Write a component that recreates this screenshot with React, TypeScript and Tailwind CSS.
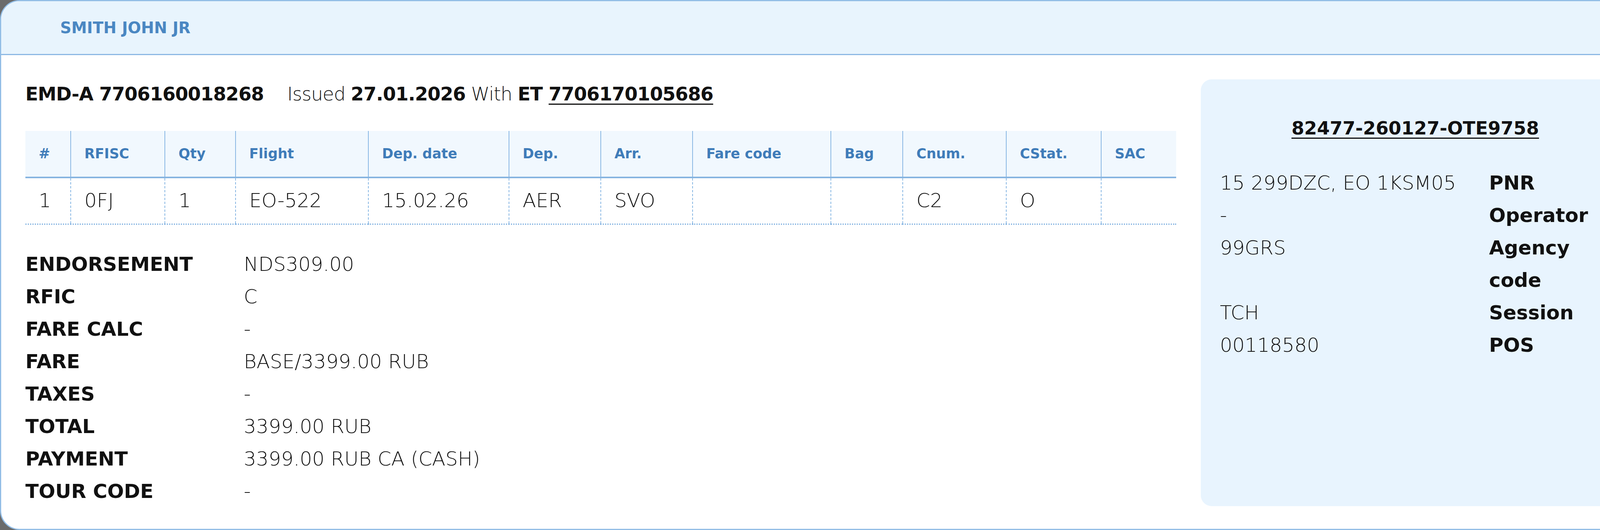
import React from "react";

const cols = [
  { key: "#", w: 116, v: "1" },
  { key: "RFISC", w: 241, v: "0FJ" },
  { key: "Qty", w: 181, v: "1" },
  { key: "Flight", w: 340, v: "EO-522" },
  { key: "Dep. date", w: 360, v: "15.02.26" },
  { key: "Dep.", w: 235, v: "AER" },
  { key: "Arr.", w: 235, v: "SVO" },
  { key: "Fare code", w: 354, v: "" },
  { key: "Bag", w: 184, v: "" },
  { key: "Cnum.", w: 265, v: "C2" },
  { key: "CStat.", w: 243, v: "O" },
  { key: "SAC", w: 192, v: "" },
];

const details = [
  ["ENDORSEMENT", "NDS309.00"],
  ["RFIC", "C"],
  ["FARE CALC", "-"],
  ["FARE", "BASE/3399.00 RUB"],
  ["TAXES", "-"],
  ["TOTAL", "3399.00 RUB"],
  ["PAYMENT", "3399.00 RUB CA (CASH)"],
  ["TOUR CODE", "-"],
];

const pnr = [
  ["15 299DZC, EO 1KSM05", "PNR"],
  ["-", "Operator"],
  ["99GRS", "Agency code"],
  ["TCH", "Session"],
  ["00118580", "POS"],
];

export default function App() {
  return (
    <div
      className="w-[4239px] h-[1356px] bg-[#6b6b6b] pr-[5px] overflow-hidden text-[#111111]"
      style={{ fontFamily: '"DejaVu Sans", "Liberation Sans", sans-serif' }}
    >
      <div className="h-full w-full bg-white rounded-[50px] border-[3px] border-[#92bde6] overflow-hidden flex flex-col">
        {/* passenger header */}
        <div className="h-[138px] shrink-0 bg-[#e8f4fd] border-b-[3px] border-[#8db9e4] flex items-center pl-[151px]">
          <span className="text-[40px] font-bold text-[#4a87c2] uppercase">Smith John Jr</span>
        </div>

        <div className="flex flex-1 pl-[62px] pr-[59px] pt-[62px] gap-[62px]">
          {/* left column */}
          <div className="flex-1 flex flex-col">
            <div className="h-[74px] flex items-center text-[48px] tracking-[-1px] whitespace-pre">
              <span className="font-bold">EMD-A 7706160018268</span>
              <span className="font-light ml-[60px]">Issued </span>
              <span className="font-bold">27.01.2026</span>
              <span className="font-light"> With </span>
              <span className="font-bold">ET </span>
              <span className="font-bold underline underline-offset-[8px] decoration-[3px]">7706170105686</span>
            </div>

            <table className="mt-[58px] border-collapse table-fixed w-[2946px]">
              <colgroup>
                {cols.map((c) => (
                  <col key={c.key} style={{ width: c.w }} />
                ))}
              </colgroup>
              <thead>
                <tr className="bg-[#f1f8fe] h-[119px] border-b-[4px] border-[#86b4e0]">
                  {cols.map((c, i) => (
                    <th
                      key={c.key}
                      className={`text-left pl-[34px] text-[35px] font-bold text-[#3f7cb9] whitespace-nowrap ${
                        i > 0 ? "border-l-2 border-[#8ab8e4]" : ""
                      }`}
                    >
                      {c.key}
                    </th>
                  ))}
                </tr>
              </thead>
              <tbody>
                <tr className="h-[119px] border-b-[3px] border-dotted border-[#7fb0e0]">
                  {cols.map((c, i) => (
                    <td
                      key={c.key}
                      className={`pl-[34px] text-[50px] font-light whitespace-nowrap ${
                        i > 0 ? "border-l-2 border-dashed border-[#8ab8e4]" : ""
                      }`}
                    >
                      {c.v}
                    </td>
                  ))}
                </tr>
              </tbody>
            </table>

            <div className="mt-[60px] grid grid-cols-[559px_1fr] text-[50px] leading-[83px]">
              {details.map(([k, v]) => (
                <React.Fragment key={k}>
                  <div className="font-bold whitespace-nowrap">{k}</div>
                  <div className="font-light whitespace-nowrap">{v}</div>
                </React.Fragment>
              ))}
            </div>
          </div>

          {/* right panel */}
          <div className="w-[1098px] h-[1092px] shrink-0 bg-[#e8f4fe] rounded-[28px] px-[49px] pt-[83px]">
            <div className="text-center text-[47px] leading-[83px] font-bold underline underline-offset-[8px] decoration-[3px]">
              82477-260127-OTE9758
            </div>
            <div className="mt-[58px] grid grid-cols-[689px_1fr] text-[50px] leading-[83px]">
              {pnr.map(([v, k]) => (
                <React.Fragment key={k}>
                  <div className="font-light whitespace-nowrap">{v}</div>
                  <div className="font-bold pr-[40px]">{k}</div>
                </React.Fragment>
              ))}
            </div>
          </div>
        </div>
      </div>
    </div>
  );
}
